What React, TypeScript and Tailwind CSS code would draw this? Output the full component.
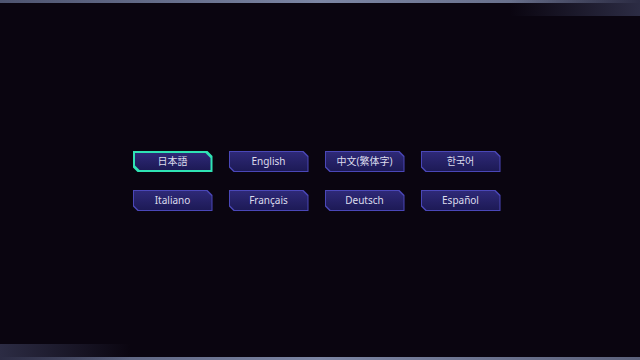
import React, { useState } from "react";

/** 언어 목록 */
const languages = [
  "日本語",
  "English",
  "中文(繁体字)",
  "한국어",
  "Italiano",
  "Français",
  "Deutsch",
  "Español",
];

const cut = "polygon(0 0, calc(100% - 5px) 0, 100% 5px, 100% 100%, 5px 100%, 0 calc(100% - 5px))";

function LangButton({ label, active, onClick }: { label: string; active: boolean; onClick: () => void }) {
  return (
    <button
      type="button"
      onClick={onClick}
      className={`w-[80px] h-[21px] ${active ? "p-[2px] bg-[#2fe3b4]" : "p-px bg-[#4a47b8]"}`}
      style={{ clipPath: cut }}
    >
      <div
        className="w-full h-full flex items-center justify-center bg-gradient-to-b from-[#2e2977] to-[#1d1a56] text-[10px] text-[#dcdcec]"
        style={{ clipPath: cut, fontFamily: '"Noto Sans", "Noto Sans CJK JP", "Noto Sans CJK KR", sans-serif' }}
      >
        {label}
      </div>
    </button>
  );
}

export default function App() {
  const [selected, setSelected] = useState(0);

  return (
    <div className="w-[640px] h-[360px] bg-[#0a0510] flex flex-col overflow-hidden">
      {/* 상단 바 */}
      <div className="relative h-[16px] shrink-0">
        <div className="h-[3px] bg-gradient-to-r from-[#4e5470] via-[#7c86a4] to-[#5c627c]" />
        <div className="absolute right-0 top-0 w-[130px] h-[16px] bg-gradient-to-r from-transparent to-[#2c2c44]" />
      </div>

      {/* 본문 */}
      <main className="flex-1 flex items-center justify-center pr-[7px] pt-[2px]">
        <div className="grid grid-cols-4 gap-x-[16px] gap-y-[18px]">
          {languages.map((l, i) => (
            <LangButton key={l} label={l} active={selected === i} onClick={() => setSelected(i)} />
          ))}
        </div>
      </main>

      {/* 하단 바 */}
      <div className="relative h-[16px] shrink-0 flex flex-col justify-end">
        <div className="absolute left-0 bottom-0 w-[130px] h-[16px] bg-gradient-to-l from-transparent to-[#2c2c44]" />
        <div className="h-[3px] bg-gradient-to-r from-[#4e5470] via-[#7c86a4] to-[#5c627c]" />
      </div>
    </div>
  );
}
